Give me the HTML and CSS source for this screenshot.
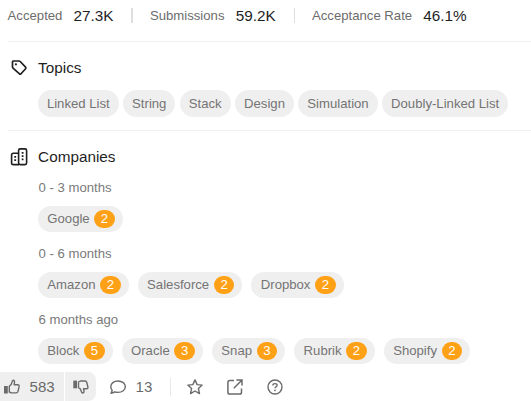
FILE: index.html
```html
<!DOCTYPE html>
<html lang="en">
<head>
<meta charset="utf-8">
<title>Problem details</title>
<link rel="stylesheet" href="styles.css">
</head>
<body>
<main class="panel">
  <div class="stats">
    <span class="label">Accepted</span><span class="value">27.3K</span>
    <i class="bar thick"></i>
    <span class="label">Submissions</span><span class="value">59.2K</span>
    <i class="bar"></i>
    <span class="label">Acceptance Rate</span><span class="value">46.1%</span>
  </div>
  <section class="section topics">
    <h2 class="title">
      <svg class="icon" viewBox="0 0 20 20" fill="none" stroke="currentColor" stroke-width="1.7" stroke-linejoin="round"><path d="M3.5 3.7 Q3.5 3 4.2 3 H10 Q10.7 3 11.2 3.5 L16.6 9.2 Q17.3 10 16.6 10.7 L12 15.8 Q11.2 16.5 10.5 15.8 L4.3 10.4 Q3.5 9.7 3.5 9 Z"/><circle cx="6.9" cy="6.3" r="1.1" fill="currentColor" stroke="none"/></svg>
      Topics
    </h2>
    <div class="tags">
      <span class="tag">Linked List</span><span class="tag">String</span><span class="tag">Stack</span><span class="tag">Design</span><span class="tag">Simulation</span><span class="tag">Doubly-Linked List</span>
    </div>
  </section>
  <section class="section companies">
    <h2 class="title">
      <svg class="icon" viewBox="0 0 20 20" fill="none" stroke="currentColor" stroke-width="1.6"><rect x="9.6" y="1.9" width="8" height="15.7" rx="1.6"/><path d="M9 6.2H4.4Q2.6 6.2 2.6 7.9V15.9Q2.6 17.6 4.4 17.6H10"/><path stroke-width="1.8" stroke-dasharray="1.8 1.4" d="M13.6 5V13.2M6.2 9V14.5"/></svg>
      Companies
    </h2>
    <h3 class="period">0 - 3 months</h3>
    <div class="firms">
      <span class="firm">Google<b class="count">2</b></span>
    </div>
    <h3 class="period">0 - 6 months</h3>
    <div class="firms">
      <span class="firm">Amazon<b class="count">2</b></span><span class="firm">Salesforce<b class="count">2</b></span><span class="firm">Dropbox<b class="count">2</b></span>
    </div>
    <h3 class="period">6 months ago</h3>
    <div class="firms">
      <span class="firm">Block<b class="count">5</b></span><span class="firm">Oracle<b class="count">3</b></span><span class="firm">Snap<b class="count">3</b></span><span class="firm">Rubrik<b class="count">2</b></span><span class="firm">Shopify<b class="count">2</b></span>
    </div>
  </section>
</main>
<footer class="actions">
  <div class="vote up">
    <svg class="act" viewBox="0 0 18 18" fill="none" stroke="currentColor" stroke-width="1.4" stroke-linejoin="round"><path fill="currentColor" stroke="none" d="M1 8H4.8V15.5H1Z"/><path d="M6.3 8.2Q8.6 7.2 9 4.2Q9.2 2.3 10.3 2.3Q11.7 2.4 11.5 4.6L11.1 6.7H14.6Q16.4 6.8 16.1 8.4L15 13.4Q14.6 14.9 13 14.9H8.2L6.3 14Z"/></svg>
    <span>583</span>
  </div>
  <div class="vote down">
    <svg class="act" viewBox="0 0 18 18" fill="none" stroke="currentColor" stroke-width="1.4" stroke-linejoin="round"><path fill="currentColor" stroke="none" d="M1.3 2.6H5V10.3H1.3Z"/><path d="M6.5 4L8.3 3H13Q14.4 3 14.8 4.5L15.9 9Q16.2 10.6 14.6 10.8H11.5L12 13.1Q12.2 14.9 10.9 15Q9.6 15 9.3 13.3Q8.8 10.7 6.5 9.7Z"/></svg>
  </div>
  <div class="comments">
    <svg class="act" viewBox="0 0 18 18" fill="none" stroke="currentColor" stroke-width="1.4" stroke-linejoin="round"><path d="M2 15.2L3.2 12.4Q1.8 10.8 1.8 8.7C1.8 5.5 4.8 3 9 3S16.3 5.5 16.3 8.7S13.2 14.4 9 14.4Q7.2 14.4 5.7 13.9Q4 15.2 2 15.2Z"/></svg>
    <span>13</span>
  </div>
  <i class="rule"></i>
  <svg class="act star" viewBox="0 0 18 18" fill="none" stroke="currentColor" stroke-width="1.4" stroke-linejoin="round"><path d="M9 1.9L11.1 6.6L16.2 7.1L12.4 10.5L13.5 15.6L9 13L4.5 15.6L5.6 10.5L1.8 7.1L6.9 6.6Z"/></svg>
  <svg class="act share" viewBox="0 0 18 18" fill="none" stroke="currentColor" stroke-width="1.5"><path d="M8 2.5H3.8Q1.9 2.5 1.9 4.4V14.2Q1.9 16.1 3.8 16.1H13.6Q15.5 16.1 15.5 14.2V10.5M10.4 2H16V7.6M16 2L7.8 10.2"/></svg>
  <svg class="act help" viewBox="0 0 18 18" fill="none" stroke="currentColor" stroke-width="1.4"><circle cx="9" cy="9" r="7"/><path d="M6.9 7.5Q6.9 5.6 9 5.6Q11.1 5.6 11.1 7.3Q11.1 8.3 10 8.8Q9 9.3 9 10.3"/><circle cx="9" cy="12.3" r=".9" fill="currentColor" stroke="none"/></svg>
</footer>
</body>
</html>
```
FILE: styles.css
```css
* { box-sizing: border-box; }
body {
  margin: 0;
  width: 531px;
  height: 401px;
  overflow: hidden;
  background: #fff;
  color: #1f1f1f;
  font: 13.15px/18px "Liberation Sans", Arial, sans-serif;
}
.panel { height: 372px; padding-left: 8px; }
.stats { display: flex; align-items: center; height: 41px; margin-left: -.4px; padding-bottom: 10px; white-space: nowrap; }
.label { color: #6c6c6c; }
.value { margin-left: 11.2px; font-size: 15.3px; }
.bar { width: 1px; height: 15px; margin: 0 17.4px 0 18px; background: #dedede; }
.bar.thick { width: 2px; margin-left: 17px; }
.section { border-top: 1px solid #efefef; }
.topics { height: 89px; padding-top: 16px; }
.companies { padding-top: 16px; }
.title {
  display: flex;
  align-items: center;
  height: 20px;
  margin: 0;
  font-size: 15.3px;
  font-weight: 400;
}
.icon { width: 20px; height: 20px; margin: 0 9.6px 0 .5px; }
.tags { display: flex; gap: 4.6px; margin: 12px 0 0 30px; }
.tag, .firm {
  display: flex;
  align-items: center;
  border-radius: 14px;
  background: #efefef;
  color: #747474;
  white-space: nowrap;
}
.tag { height: 27px; padding: 0 8.9px; }
.period { height: 18px; margin: 13px 0 0 30.5px; color: #7a7a7a; font-size: 13.15px; font-weight: 400; }
.title + .period { margin-top: 12px; }
.firms { display: flex; gap: 9.2px; margin: 9px 0 0 30px; }
.firm { height: 26px; padding: 0 8px 0 9.3px; }
.count {
  height: 18px;
  margin-left: 4.6px;
  padding: 0 6.6px;
  border-radius: 9px;
  background: #ffa116;
  color: #fff;
  font-weight: 400;
}
.actions { display: flex; align-items: center; height: 29px; color: #6b6b6b; font-size: 15.1px; }
.act { display: block; width: 18px; height: 18px; }
.vote { display: flex; align-items: center; height: 29px; background: #efefef; }
.up { width: 64px; padding-left: 3px; gap: 8.5px; }
.down { width: 31px; margin-left: 1px; padding-left: 7px; border-radius: 0 8px 8px 0; }
.comments { display: flex; align-items: center; gap: 8.5px; width: 61px; margin-left: 13px; }
.rule { width: 1px; height: 18px; background: #e8e8e8; }
.star { margin-left: 15px; }
.share { margin-left: 22px; }
.help { margin-left: 22px; }
```
